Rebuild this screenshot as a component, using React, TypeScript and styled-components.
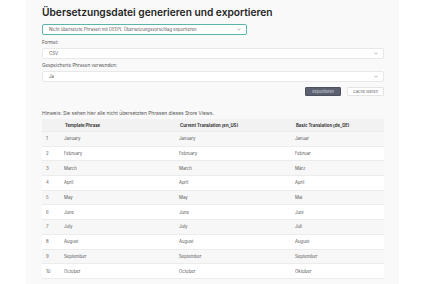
import styled, { createGlobalStyle } from "styled-components";

const GlobalStyle = createGlobalStyle`
  html, body {
    margin: 0;
    padding: 0;
    background: #ffffff;
  }
  * {
    box-sizing: border-box;
  }
`;

const Page = styled.div`
  width: 426px;
  height: 284px;
  overflow: hidden;
  padding: 0 27px 0 26px;
  font-family: Inter, "Open Sans", sans-serif;
`;

const Panel = styled.div`
  height: 100%;
  background: #f9f9f9;
  padding: 6px 15px 0 16px;
`;

const Title = styled.h1`
  margin: 0 0 5px 0;
  font-size: 10.2px;
  font-weight: 600;
  color: #1f1f1f;
  line-height: 13px;
`;

const Select = styled.div<{ $width?: string; $accent?: boolean }>`
  width: ${(p) => p.$width || "100%"};
  height: 11px;
  background: #ffffff;
  border: ${(p) => (p.$accent ? "1px solid #5bb5ab" : "1px solid #e8e8e8")};
  border-radius: 2px;
  display: flex;
  align-items: center;
  justify-content: space-between;
  padding: 0 5px 0 6px;
  font-size: 4.3px;
  color: #555;
`;

const Label = styled.div<{ $gap: number }>`
  font-size: 4.6px;
  color: #555;
  margin: ${(p) => p.$gap}px 0 2px 0;
  line-height: 6px;
`;

const ButtonRow = styled.div`
  display: flex;
  justify-content: flex-end;
  gap: 6px;
  margin-top: 5px;
`;

const Button = styled.div<{ $primary?: boolean }>`
  height: 9px;
  padding: 0 ${(p) => (p.$primary ? "6px" : "5px")};
  display: flex;
  align-items: center;
  font-size: 4px;
  background: ${(p) => (p.$primary ? "#5c6170" : "#ffffff")};
  color: ${(p) => (p.$primary ? "#d8dbe2" : "#666")};
  border: 1px solid ${(p) => (p.$primary ? "#4c515e" : "#e3e3e3")};
  border-radius: 1px;
`;

const Hint = styled.p`
  margin: 14px 0 3px 0;
  font-size: 4.9px;
  color: #555;
  line-height: 6px;
`;

const Table = styled.div`
  width: 100%;
  display: flex;
  flex-direction: column;
`;

const Row = styled.div<{ $bg: string; $h: number }>`
  display: grid;
  grid-template-columns: 18px 115px 116px 1fr;
  height: ${(p) => p.$h}px;
  align-items: center;
  background: ${(p) => p.$bg};
  border-bottom: 1px solid #ececec;
`;

const Cell = styled.div<{ $bold?: boolean }>`
  padding-left: ${(p) => (p.$bold ? "5px" : "4px")};
  font-size: 4.3px;
  font-weight: ${(p) => (p.$bold ? 700 : 400)};
  color: ${(p) => (p.$bold ? "#333" : "#555")};
  white-space: nowrap;
`;

const Chevron = () => (
  <svg width="4" height="3" viewBox="0 0 4 3">
    <path d="M0.5 0.8 L2 2.2 L3.5 0.8" fill="none" stroke="#888" strokeWidth="0.6" />
  </svg>
);

const rows = [
  ["January", "January", "Januar"],
  ["February", "February", "Februar"],
  ["March", "March", "März"],
  ["April", "April", "April"],
  ["May", "May", "Mai"],
  ["June", "June", "Juni"],
  ["July", "July", "Juli"],
  ["August", "August", "August"],
  ["September", "September", "September"],
  ["October", "October", "Oktober"],
];

export default function App() {
  return (
    <>
      <GlobalStyle />
      <Page>
        <Panel>
          <Title>Übersetzungsdatei generieren und exportieren</Title>
          <Select $width="205px" $accent>
            <span>Nicht übersetzte Phrasen mit DEEPL Übersetzungsvorschlag exportieren</span>
            <Chevron />
          </Select>
          <Label $gap={5}>Format:</Label>
          <Select>
            <span>CSV</span>
            <Chevron />
          </Select>
          <Label $gap={4}>Gespeicherte Phrasen verwenden:</Label>
          <Select>
            <span>Ja</span>
            <Chevron />
          </Select>
          <ButtonRow>
            <Button $primary>exportieren</Button>
            <Button>Cache leeren</Button>
          </ButtonRow>
          <Hint>Hinweis: Sie sehen hier alle nicht übersetzten Phrasen dieses Store Views.</Hint>
          <Table>
            <Row $bg="#f2f2f2" $h={13}>
              <Cell $bold></Cell>
              <Cell $bold>Template Phrase</Cell>
              <Cell $bold>Current Translation (en_US)</Cell>
              <Cell $bold>Basic Translation (de_DE)</Cell>
            </Row>
            {rows.map((r, i) => (
              <Row key={i} $h={14.7} $bg={i % 2 === 0 ? "#f7f7f7" : "#ffffff"}>
                <Cell>{i + 1}</Cell>
                <Cell>{r[0]}</Cell>
                <Cell>{r[1]}</Cell>
                <Cell>{r[2]}</Cell>
              </Row>
            ))}
          </Table>
        </Panel>
      </Page>
    </>
  );
}
